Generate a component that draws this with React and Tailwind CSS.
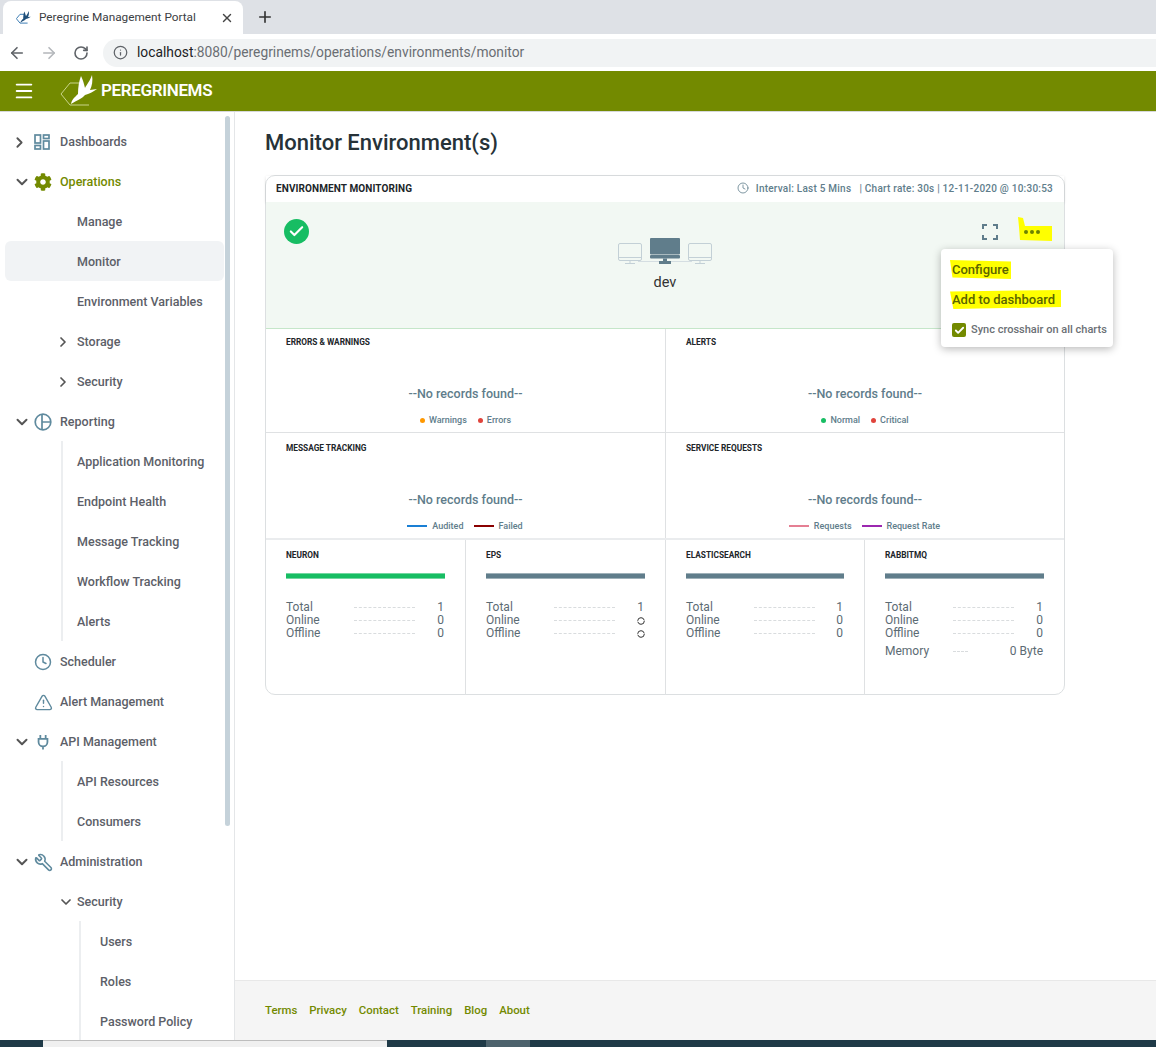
import { ChevronRight, ChevronDown, Clock, TriangleAlert, Wrench, ArrowLeft, ArrowRight, RotateCw, Info, X, Plus, Check, Menu } from 'lucide-react'
import { FaCog } from 'react-icons/fa'

const Reporting = ({ className }) => (
  <svg viewBox="0 0 18 18" className={className} fill="none" stroke="currentColor" strokeWidth="1.7">
    <circle cx="9" cy="9" r="7.8" />
    <path d="M8 1.2V16.8M8 9H16.8" />
  </svg>
)

const PlugIcon = ({ className }) => (
  <svg viewBox="0 0 18 18" className={className} fill="none" stroke="currentColor" strokeWidth="2">
    <path d="M6 1v4.5M12 1v4.5M4 5.5h10v3.5a5 5 0 0 1-10 0zM9 14v3.5" />
  </svg>
)

const DashIcon = ({ className }) => (
  <svg viewBox="0 0 16 16" className={className} fill="none" stroke="currentColor" strokeWidth="1.7">
    <rect x="1" y="1" width="5.5" height="8" />
    <rect x="1" y="11.5" width="5.5" height="3.5" />
    <rect x="9.5" y="1" width="5.5" height="3.5" />
    <rect x="9.5" y="7" width="5.5" height="8" />
  </svg>
)

const wing = 'M11 29C12 24 15 22 18 19C18 12 19 6 21 1C23 5 24 9 25 13C27 9 30 6 32 0C33 6 32 11 30 15L37 14C33 17 29 19 25 20C22 24 17 25 11 29Z'

const menu = [
  { label: 'Dashboards', level: 0, arrow: 'right', icon: <DashIcon className="w-[16px] h-[16px] text-[#5f8a9e]" /> },
  { label: 'Operations', level: 0, arrow: 'down', active: true, icon: <FaCog size={18} className="text-[#738a00]" /> },
  { label: 'Manage', level: 1 },
  { label: 'Monitor', level: 1, selected: true },
  { label: 'Environment Variables', level: 1 },
  { label: 'Storage', level: 1, arrow: 'right' },
  { label: 'Security', level: 1, arrow: 'right' },
  { label: 'Reporting', level: 0, arrow: 'down', icon: <Reporting className="w-[18px] h-[18px] text-[#5f8a9e]" /> },
  { label: 'Application Monitoring', level: 1, line: true },
  { label: 'Endpoint Health', level: 1, line: true },
  { label: 'Message Tracking', level: 1, line: true },
  { label: 'Workflow Tracking', level: 1, line: true },
  { label: 'Alerts', level: 1, line: true },
  { label: 'Scheduler', level: 0, icon: <Clock size={18} strokeWidth={2} className="text-[#5f8a9e]" /> },
  { label: 'Alert Management', level: 0, icon: <TriangleAlert size={19} strokeWidth={1.8} className="text-[#5f8a9e]" /> },
  { label: 'API Management', level: 0, arrow: 'down', icon: <PlugIcon className="w-[16px] h-[16px] ml-[1px] text-[#5f8a9e]" /> },
  { label: 'API Resources', level: 1, line: true },
  { label: 'Consumers', level: 1, line: true },
  { label: 'Administration', level: 0, arrow: 'down', icon: <Wrench size={19} strokeWidth={2} className="text-[#5f8a9e] -scale-x-100" /> },
  { label: 'Security', level: 1, arrow: 'down' },
  { label: 'Users', level: 2, line: true },
  { label: 'Roles', level: 2, line: true },
  { label: 'Password Policy', level: 2, line: true },
]

function NavRow({ item }) {
  const Arrow = item.arrow === 'down' ? ChevronDown : ChevronRight
  if (item.level === 0) {
    return (
      <div className="h-10 flex items-center">
        <div className={`w-[34px] pt-[2px] shrink-0 text-[#555] ${item.arrow === 'down' ? 'pl-[13px]' : 'pl-[11px]'}`}>
          {item.arrow && <Arrow size={item.arrow === 'down' ? 18 : 17} strokeWidth={2.6} />}
        </div>
        <div className="w-[26px] pt-[2px] shrink-0 flex justify-start">{item.icon}</div>
        <span className={`pt-[2px] ${item.active ? 'text-[#738a00]' : ''}`}>{item.label}</span>
      </div>
    )
  }
  if (item.level === 1) {
    return (
      <div className={`h-10 flex items-center ml-[5px] w-[219px] rounded-md ${item.selected ? 'bg-[#f1f3f5]' : ''}`}>
        <div className={`h-10 w-[16px] ml-[56px] pt-[2px] shrink-0 flex items-center ${item.line ? 'border-l-2 border-[#eceef0]' : ''}`}>
          {item.arrow && <Arrow size={16} strokeWidth={2.6} className={`text-[#555] shrink-0 ${item.arrow === 'down' ? '-ml-[3px]' : '-ml-[6px]'}`} />}
        </div>
        <span className="pt-[2px]">{item.label}</span>
      </div>
    )
  }
  return (
    <div className="h-10 flex items-center">
      <div className="h-10 ml-[79px] w-[21px] border-l-2 border-[#eceef0] shrink-0" />
      <span className="pt-[2px]">{item.label}</span>
    </div>
  )
}

function Sidebar() {
  return (
    <aside className="relative w-[235px] shrink-0 border-r border-[#e4e6e8] pt-[9px] overflow-hidden text-[12.5px] font-medium text-[#5c6068]">
      {menu.map((item, i) => (
        <NavRow key={i} item={item} />
      ))}
      <div className="absolute left-[225px] top-[4px] w-[5px] h-[710px] rounded-sm bg-[#c5d2da]" />
    </aside>
  )
}

function MonitorDim() {
  return (
    <svg viewBox="0 0 24 21" className="w-[24px] h-[21px]" fill="none" stroke="#c3d0d6" strokeWidth="1">
      <rect x="0.5" y="0.5" width="23" height="17" rx="1.5" />
      <path d="M0.5 14.5h23M12 18v2M7 20.5h10" />
    </svg>
  )
}

function MonitorMain() {
  return (
    <svg viewBox="0 0 30 26" className="w-[30px] h-[26px]" fill="#607d8b">
      <rect x="0" y="0" width="30" height="16.5" rx="1" />
      <rect x="0" y="17" width="30" height="3.5" rx="1" />
      <rect x="13" y="20.5" width="4" height="2.5" />
      <rect x="9" y="23" width="12" height="3" />
    </svg>
  )
}

function ChartCell({ title, legend, top, height, right }) {
  return (
    <div className={`${height} ${top} pl-[20px] relative flex flex-col ${right ? '' : 'border-r border-[#dfe1e3]'}`}>
      <div className="text-[8.3px] leading-[11px] font-bold text-[#212529]">{title}</div>
      <div className="mt-[38px] -ml-[20px] text-center text-[12.5px] font-medium leading-[16px] text-[#607d8b]">--No records found--</div>
      <div className="mt-[12px] -ml-[20px] flex justify-center items-center gap-[11px] text-[9px] font-medium leading-[12px] text-[#607d8b]">
        {legend}
      </div>
    </div>
  )
}

const Dot = ({ color, label }) => (
  <span className="flex items-center gap-[4px]">
    <span className={`w-[5px] h-[5px] rounded-full ${color}`} />
    {label}
  </span>
)

const Dash = ({ color, label }) => (
  <span className="flex items-center gap-[5px] -ml-[1px]">
    <span className={`w-[20px] h-[2px] ${color}`} />
    {label}
  </span>
)

const Spinner = () => (
  <svg viewBox="0 0 8 8" className="w-[8px] h-[8px] ml-auto -mr-[1px]" fill="none" stroke="#333" strokeWidth="1">
    <circle cx="4" cy="4" r="3.3" strokeDasharray="9.3 1" />
  </svg>
)

function StatRow({ label, value, short, spin, className }) {
  return (
    <div className={`flex items-center h-[13px] leading-[13px] ${className || ''}`}>
      <span className="w-[68px] shrink-0">{label}</span>
      <span className={`${short ? 'w-[15px]' : 'w-[61px]'} shrink-0 border-t border-dashed border-[#d9dcde]`} />
      {spin ? <Spinner /> : <span className="ml-auto">{value}</span>}
    </div>
  )
}

function ServiceCell({ name, bar, spin, memory, last }) {
  return (
    <div className={`pl-[20px] pr-[20px] pt-[10px] ${last ? '' : 'border-r border-[#dfe1e3]'}`}>
      <div className="text-[8.3px] leading-[11px] font-bold text-[#212529]">{name}</div>
      <div className={`h-[6px] mt-[12px] mb-[22px] border-y border-white/40 ${bar}`} />
      <div className="text-[12px] text-[#5c6b74] pr-[1px]">
        <StatRow label="Total" value="1" />
        <StatRow label="Online" value="0" spin={spin} />
        <StatRow label="Offline" value="0" spin={spin} />
        {memory && <StatRow label="Memory" value="0 Byte" short className="mt-[5px]" />}
      </div>
    </div>
  )
}

function Card() {
  return (
    <div className="relative w-[800px] h-[520px] border border-[#dcdfe1] rounded-[10px]">
      <div className="h-[26px] flex items-center justify-between pl-[10px] pr-[11px] pb-[2px] shadow-[0_1px_3px_rgba(0,0,0,0.12)] relative">
        <span className="text-[10px] font-bold text-[#212529] tracking-[0.1px]">ENVIRONMENT MONITORING</span>
        <span className="flex items-center text-[10px] font-medium text-[#607d8b] tracking-[0.23px]">
          <Clock size={12} strokeWidth={1.6} className="mr-[7px]" />
          Interval: Last 5 Mins&nbsp;&nbsp; | Chart rate: 30s | 12-11-2020 @ 10:30:53
        </span>
      </div>
      <div className="relative h-[127px] bg-[#f2f8f3] border-b border-[#c5e6c9] flex flex-col items-center pt-[36px]">
        <div className="absolute left-[18px] top-[17px] w-[25px] h-[25px] rounded-full bg-[#17bd63] flex items-center justify-center">
          <Check size={17} strokeWidth={3} className="text-white" />
        </div>
        <div className="flex items-end gap-[8px] relative">
          <div className="absolute left-[20px] right-[20px] bottom-[2px] h-px bg-[#d5dee2]" />
          <div className="relative"><MonitorDim /></div>
          <div className="relative"><MonitorMain /></div>
          <div className="relative"><MonitorDim /></div>
        </div>
        <div className="mt-[10px] text-[14.5px] leading-[18px] text-[#333]">dev</div>
        <svg viewBox="0 0 16 16" className="absolute left-[716px] top-[22px] w-[16px] h-[16px]" fill="none" stroke="#607d8b" strokeWidth="2">
          <path d="M1 5V1H5M11 1H15V5M15 11V15H11M5 15H1V11" />
        </svg>
        <svg viewBox="0 0 34 24" className="absolute left-[752px] top-[15px] w-[34px] h-[24px]">
          <path d="M0 0L5 1L7 9L34 9L34 24L2 23L1 10Z" fill="#ffff00" />
          <circle cx="8" cy="15" r="2" fill="#6d8200" />
          <circle cx="14" cy="15" r="2" fill="#6d8200" />
          <circle cx="20" cy="15" r="2" fill="#6d8200" />
        </svg>
      </div>
      <div className="grid grid-cols-[400px_1fr] border-b border-[#dfe1e3]">
        <ChartCell
          title="ERRORS & WARNINGS"
          top="pt-[8px]"
          height="h-[103px]"
          legend={<>
            <Dot color="bg-[#ff9800]" label="Warnings" />
            <Dot color="bg-[#e0443c]" label="Errors" />
          </>}
        />
        <ChartCell
          title="ALERTS"
          right
          top="pt-[8px]"
          height="h-[103px]"
          legend={<>
            <Dot color="bg-[#17bd63]" label="Normal" />
            <Dot color="bg-[#e0443c]" label="Critical" />
          </>}
        />
      </div>
      <div className="grid grid-cols-[400px_1fr] border-b-2 border-[#eaecee]">
        <ChartCell
          title="MESSAGE TRACKING"
          top="pt-[10px]"
          height="h-[105px]"
          legend={<>
            <Dash color="bg-[#1a7fd4]" label="Audited" />
            <Dash color="bg-[#8a0000]" label="Failed" />
          </>}
        />
        <ChartCell
          title="SERVICE REQUESTS"
          right
          top="pt-[10px]"
          height="h-[105px]"
          legend={<>
            <Dash color="bg-[#e57f93]" label="Requests" />
            <Dash color="bg-[#9c27b0]" label="Request Rate" />
          </>}
        />
      </div>
      <div className="grid grid-cols-[200px_200px_199px_1fr] h-[155px]">
        <ServiceCell name="NEURON" bar="bg-[#17bd63]" />
        <ServiceCell name="EPS" bar="bg-[#607d8b]" spin />
        <ServiceCell name="ELASTICSEARCH" bar="bg-[#607d8b]" />
        <ServiceCell name="RABBITMQ" bar="bg-[#607d8b]" memory last />
      </div>
      <div className="absolute left-[675px] top-[73px] w-[172px] h-[98px] bg-white rounded shadow-[0_2px_8px_rgba(0,0,0,0.28)] pl-[9px] pt-[11px]">
        <div className="text-[13px] font-medium leading-[19px] pl-[2px] text-[#5a6400] bg-[#ffff00] w-[61px] [clip-path:polygon(0_0,100%_8%,100%_100%,4%_92%)]">Configure</div>
        <div className="mt-[11px] text-[13px] font-medium leading-[19px] pl-[2px] text-[#5a6400] bg-[#ffff00] w-[111px] [clip-path:polygon(0_8%,100%_0,100%_90%,3%_100%)]">Add to dashboard</div>
        <div className="mt-[13px] ml-[2px] flex items-center text-[11px] font-medium text-[#6b7075]">
          <span className="w-[14px] h-[14px] rounded-[2px] bg-[#738a00] flex items-center justify-center mr-[5px]">
            <Check size={11} strokeWidth={4} className="text-white" />
          </span>
          Sync crosshair on all charts
        </div>
      </div>
    </div>
  )
}

export default function App() {
  return (
    <div className="w-[1156px] h-[1047px] flex flex-col overflow-hidden bg-white [font-family:Roboto,sans-serif]">
      <div className="h-[34px] bg-[#dee1e6] flex items-end pl-[3px] shrink-0">
        <div className="w-[240px] h-[33px] bg-white rounded-t-lg flex items-center pl-[13px] pr-[9px] text-[11.8px] text-[#3c4043] [font-family:'Open_Sans',sans-serif]">
          <svg viewBox="0 0 40 32" className="w-[16px] h-[15px] mr-[7px]">
            <path d="M1 19L10 8H20M1 19L10 30H29" fill="none" stroke="#3f7fb5" strokeWidth="2.5" />
            <path d={wing} fill="#1f4f7a" />
          </svg>
          <span>Peregrine Management Portal</span>
          <X size={14} strokeWidth={2.4} className="ml-auto text-[#444]" />
        </div>
        <Plus size={18} strokeWidth={2.2} className="ml-[13px] mb-[8px] text-[#333]" />
      </div>
      <div className="h-[37px] bg-white flex items-center pl-[8px] shrink-0">
        <ArrowLeft size={18} strokeWidth={2.2} className="text-[#5f6368]" />
        <ArrowRight size={18} strokeWidth={2.2} className="ml-[14px] text-[#b4b7bb]" />
        <RotateCw size={16} strokeWidth={2.4} className="ml-[15px] text-[#5f6368]" />
        <div className="ml-[14px] flex-1 h-[28px] bg-[#f1f3f4] rounded-l-full flex items-center pl-[10px] text-[13.8px] text-[#6a6e73]">
          <Info size={15} strokeWidth={2} className="text-[#5f6368] mr-[9px]" />
          <span className="text-[#202124]">localhost</span>:8080/peregrinems/operations/environments/monitor
        </div>
      </div>
      <header className="h-[41px] bg-[#738a00] border-b border-[#d6d8da] flex items-center shrink-0 text-white">
        <Menu size={22} strokeWidth={2} className="ml-[13px]" />
        <svg viewBox="0 0 40 32" className="ml-[25px] w-[40px] h-[32px]">
          <path d="M10 8L1 19L10 30H29M10 8H20" fill="none" stroke="#c9d48a" strokeWidth="1" />
          <path d={wing} fill="white" />
        </svg>
        <span className="ml-[1px] text-[17px] font-semibold [font-family:'Open_Sans',sans-serif] tracking-[-0.35px]">PEREGRINEMS</span>
      </header>
      <div className="flex-1 flex min-h-0">
        <Sidebar />
        <main className="flex-1 flex flex-col min-w-0">
          <div className="flex-1 pl-[30px] pt-[18px]">
            <h1 className="text-[22px] font-medium leading-[26px] text-[#263238] mb-[19px]">Monitor Environment(s)</h1>
            <Card />
          </div>
          <footer className="h-[60px] bg-[#f5f5f5] border-t border-[#e8e8e8] pl-[30px] flex items-center gap-[12px] text-[11.4px] font-medium text-[#738a00]">
            <span>Terms</span>
            <span>Privacy</span>
            <span>Contact</span>
            <span>Training</span>
            <span>Blog</span>
            <span>About</span>
          </footer>
        </main>
      </div>
      <div className="h-[7px] shrink-0 flex bg-[#1f3a47]">
        <div className="w-[43px]" />
        <div className="w-[344px] bg-[#f0f0f0] border-t border-[#bdbdbd]" />
        <div className="w-[99px]" />
        <div className="w-[44px] bg-[#4d626c]" />
      </div>
    </div>
  )
}
